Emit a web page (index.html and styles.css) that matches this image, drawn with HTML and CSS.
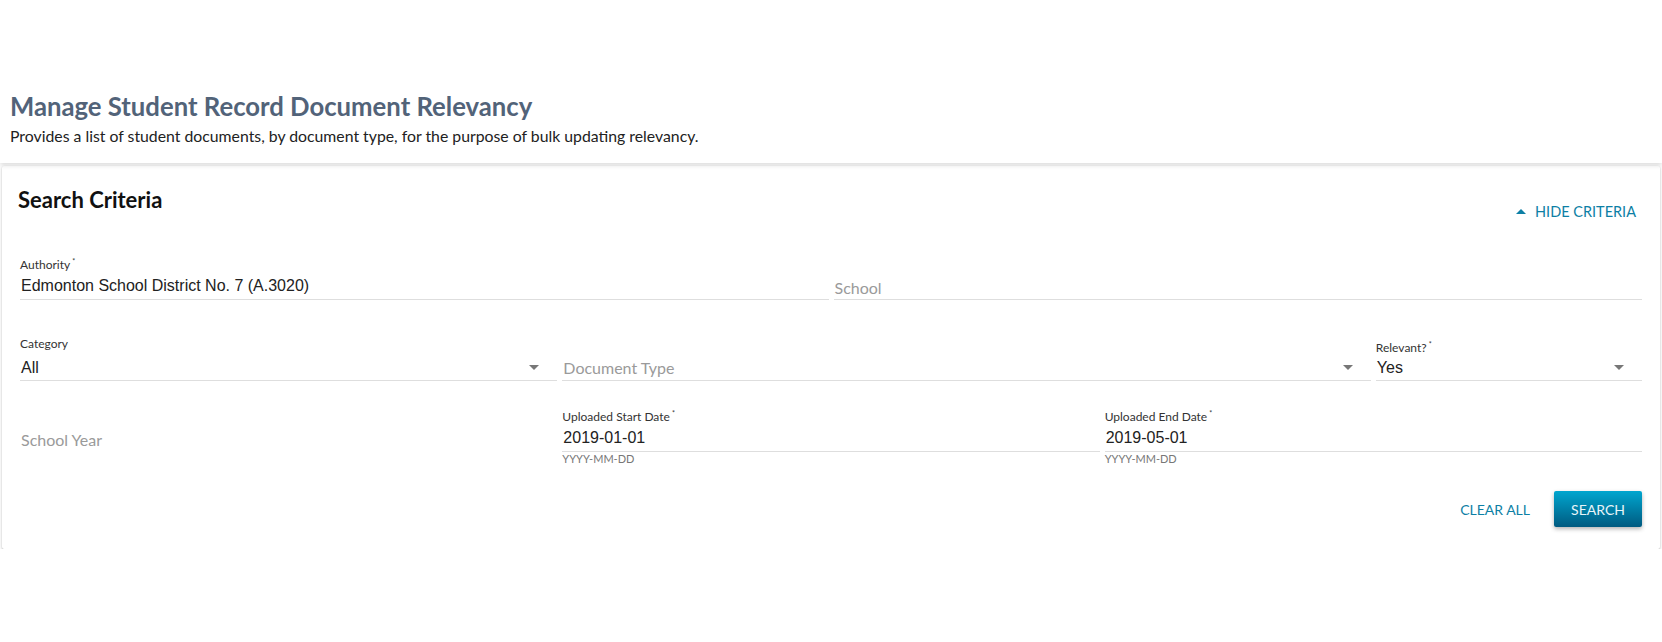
FILE: index.html
```html
<!DOCTYPE html>
<html lang="en">
<head>
  <meta charset="UTF-8" />
  <title>Manage Student Record Document Relevancy</title>
  <link rel="stylesheet" href="styles.css">
</head>
<body>
  <header class="page-head">
    <h1>Manage Student Record Document Relevancy</h1>
    <p>Provides a list of student documents, by document type, for the purpose of bulk updating relevancy.</p>
  </header>

  <section class="card">
    <div class="card-head">
      <h2>Search Criteria</h2>
      <button class="toggle" type="button">
        <span class="caret-up"></span>HIDE CRITERIA
      </button>
    </div>

    <div class="grid row-1">
      <div class="field span-6">
        <label>Authority<sup>*</sup></label>
        <div class="control"><span class="value">Edmonton School District No. 7 (A.3020)</span></div>
      </div>
      <div class="field span-6">
        <label></label>
        <div class="control"><span class="placeholder">School</span></div>
      </div>
    </div>

    <div class="grid row-2">
      <div class="field select span-4">
        <label>Category</label>
        <div class="control"><span class="value">All</span><span class="caret"></span></div>
      </div>
      <div class="field select span-6">
        <label></label>
        <div class="control"><span class="placeholder">Document Type</span><span class="caret"></span></div>
      </div>
      <div class="field select span-2">
        <label>Relevant?<sup>*</sup></label>
        <div class="control"><span class="value">Yes</span><span class="caret"></span></div>
      </div>
    </div>

    <div class="grid row-3">
      <div class="field span-4 no-line">
        <label></label>
        <div class="control"><span class="placeholder">School Year</span></div>
      </div>
      <div class="field span-4">
        <label>Uploaded Start Date<sup>*</sup></label>
        <div class="control"><span class="value">2019-01-01</span></div>
        <div class="hint">YYYY-MM-DD</div>
      </div>
      <div class="field span-4">
        <label>Uploaded End Date<sup>*</sup></label>
        <div class="control"><span class="value">2019-05-01</span></div>
        <div class="hint">YYYY-MM-DD</div>
      </div>
    </div>

    <div class="actions">
      <button class="btn-text" type="button">CLEAR ALL</button>
      <button class="btn-primary" type="button">SEARCH</button>
    </div>
  </section>
</body>
</html>
```

FILE: styles.css
```css
* {
  margin: 0;
  padding: 0;
  box-sizing: border-box;
}
body {
  font-family: Lato, "Open Sans", sans-serif;
  background: #fff;
  color: #222;
}

/* Page header */
.page-head {
  padding: 90px 10px 17px;
  box-shadow: 0 2px 5px rgba(0,0,0,0.15);
  position: relative;
  z-index: 1;
}
.page-head h1 {
  font-size: 25.7px;
  font-weight: 700;
  color: #526379;
  line-height: 32px;
}
.page-head p {
  font-size: 15.8px;
  line-height: 20px;
  color: #222;
  margin-top: 4px;
}

/* Search card */
.card {
  margin: 3px 2px 0;
  padding: 19px 18px 22px 16px;
  background: #fff;
  box-shadow: 0 1px 3px rgba(0,0,0,0.25), 0 1px 1px rgba(0,0,0,0.1);
  border-radius: 2px;
}
.card-head {
  display: flex;
  justify-content: space-between;
  align-items: flex-start;
  height: 30px;
}
.card-head h2 {
  font-size: 22px;
  font-weight: 700;
  color: #111;
  line-height: 30px;
}
.toggle {
  display: flex;
  align-items: center;
  gap: 9px;
  background: none;
  border: none;
  font-family: Lato, sans-serif;
  font-size: 14.5px;
  color: #0d7fa5;
  margin-top: 18px;
  padding: 0 6px 0 3px;
  cursor: pointer;
}
.caret-up {
  width: 0;
  height: 0;
  border-left: 5px solid transparent;
  border-right: 5px solid transparent;
  border-bottom: 5px solid #0d7fa5;
}

/* Form grid */
.grid {
  display: grid;
  grid-template-columns: repeat(12, 1fr);
  column-gap: 5px;
  margin-left: 2px;
}
.row-1 { margin-top: 38px; }
.row-2 { margin-top: 36px; }
.row-3 { margin-top: 24px; }
.span-2 { grid-column: span 2; }
.span-4 { grid-column: span 4; }
.span-6 { grid-column: span 6; }

.field label {
  display: block;
  height: 20px;
  font-size: 12px;
  line-height: 16px;
  color: #333;
}
.field label sup {
  font-size: 7px;
  margin-left: 2px;
  vertical-align: 5px;
}
.control {
  display: flex;
  align-items: center;
  height: 27px;
  border-bottom: 1px solid #dedede;
  padding-left: 1px;
}
.select label {
  height: 19px;
}
.select .control {
  height: 26px;
}
.no-line .control {
  border-bottom-color: transparent;
}
.value {
  flex: 1;
  font-family: "Liberation Sans", Arial, sans-serif;
  font-size: 16px;
  color: #222;
}
.placeholder {
  flex: 1;
  font-size: 16px;
  color: #9a9a9a;
  padding-top: 2px;
}
.select .placeholder {
  padding-top: 0;
}
.caret {
  width: 0;
  height: 0;
  border-left: 5px solid transparent;
  border-right: 5px solid transparent;
  border-top: 5px solid #777;
  margin-right: 18px;
}
.hint {
  font-size: 11px;
  color: #777;
  margin-top: 0;
  line-height: 14px;
}

/* Actions */
.actions {
  display: flex;
  justify-content: flex-end;
  align-items: center;
  gap: 16px;
  margin-top: 25px;
}
.btn-text {
  background: none;
  border: none;
  font-family: Lato, sans-serif;
  font-size: 14px;
  color: #0d7fa5;
  padding: 8px 8px;
  cursor: pointer;
}
.btn-primary {
  width: 88px;
  height: 36px;
  border: none;
  border-radius: 2px;
  font-family: Lato, sans-serif;
  font-size: 14px;
  color: #e8f5f9;
  background: linear-gradient(#00a6cf, #005a80);
  box-shadow: 0 2px 4px rgba(0,0,0,0.3);
  cursor: pointer;
}
```
